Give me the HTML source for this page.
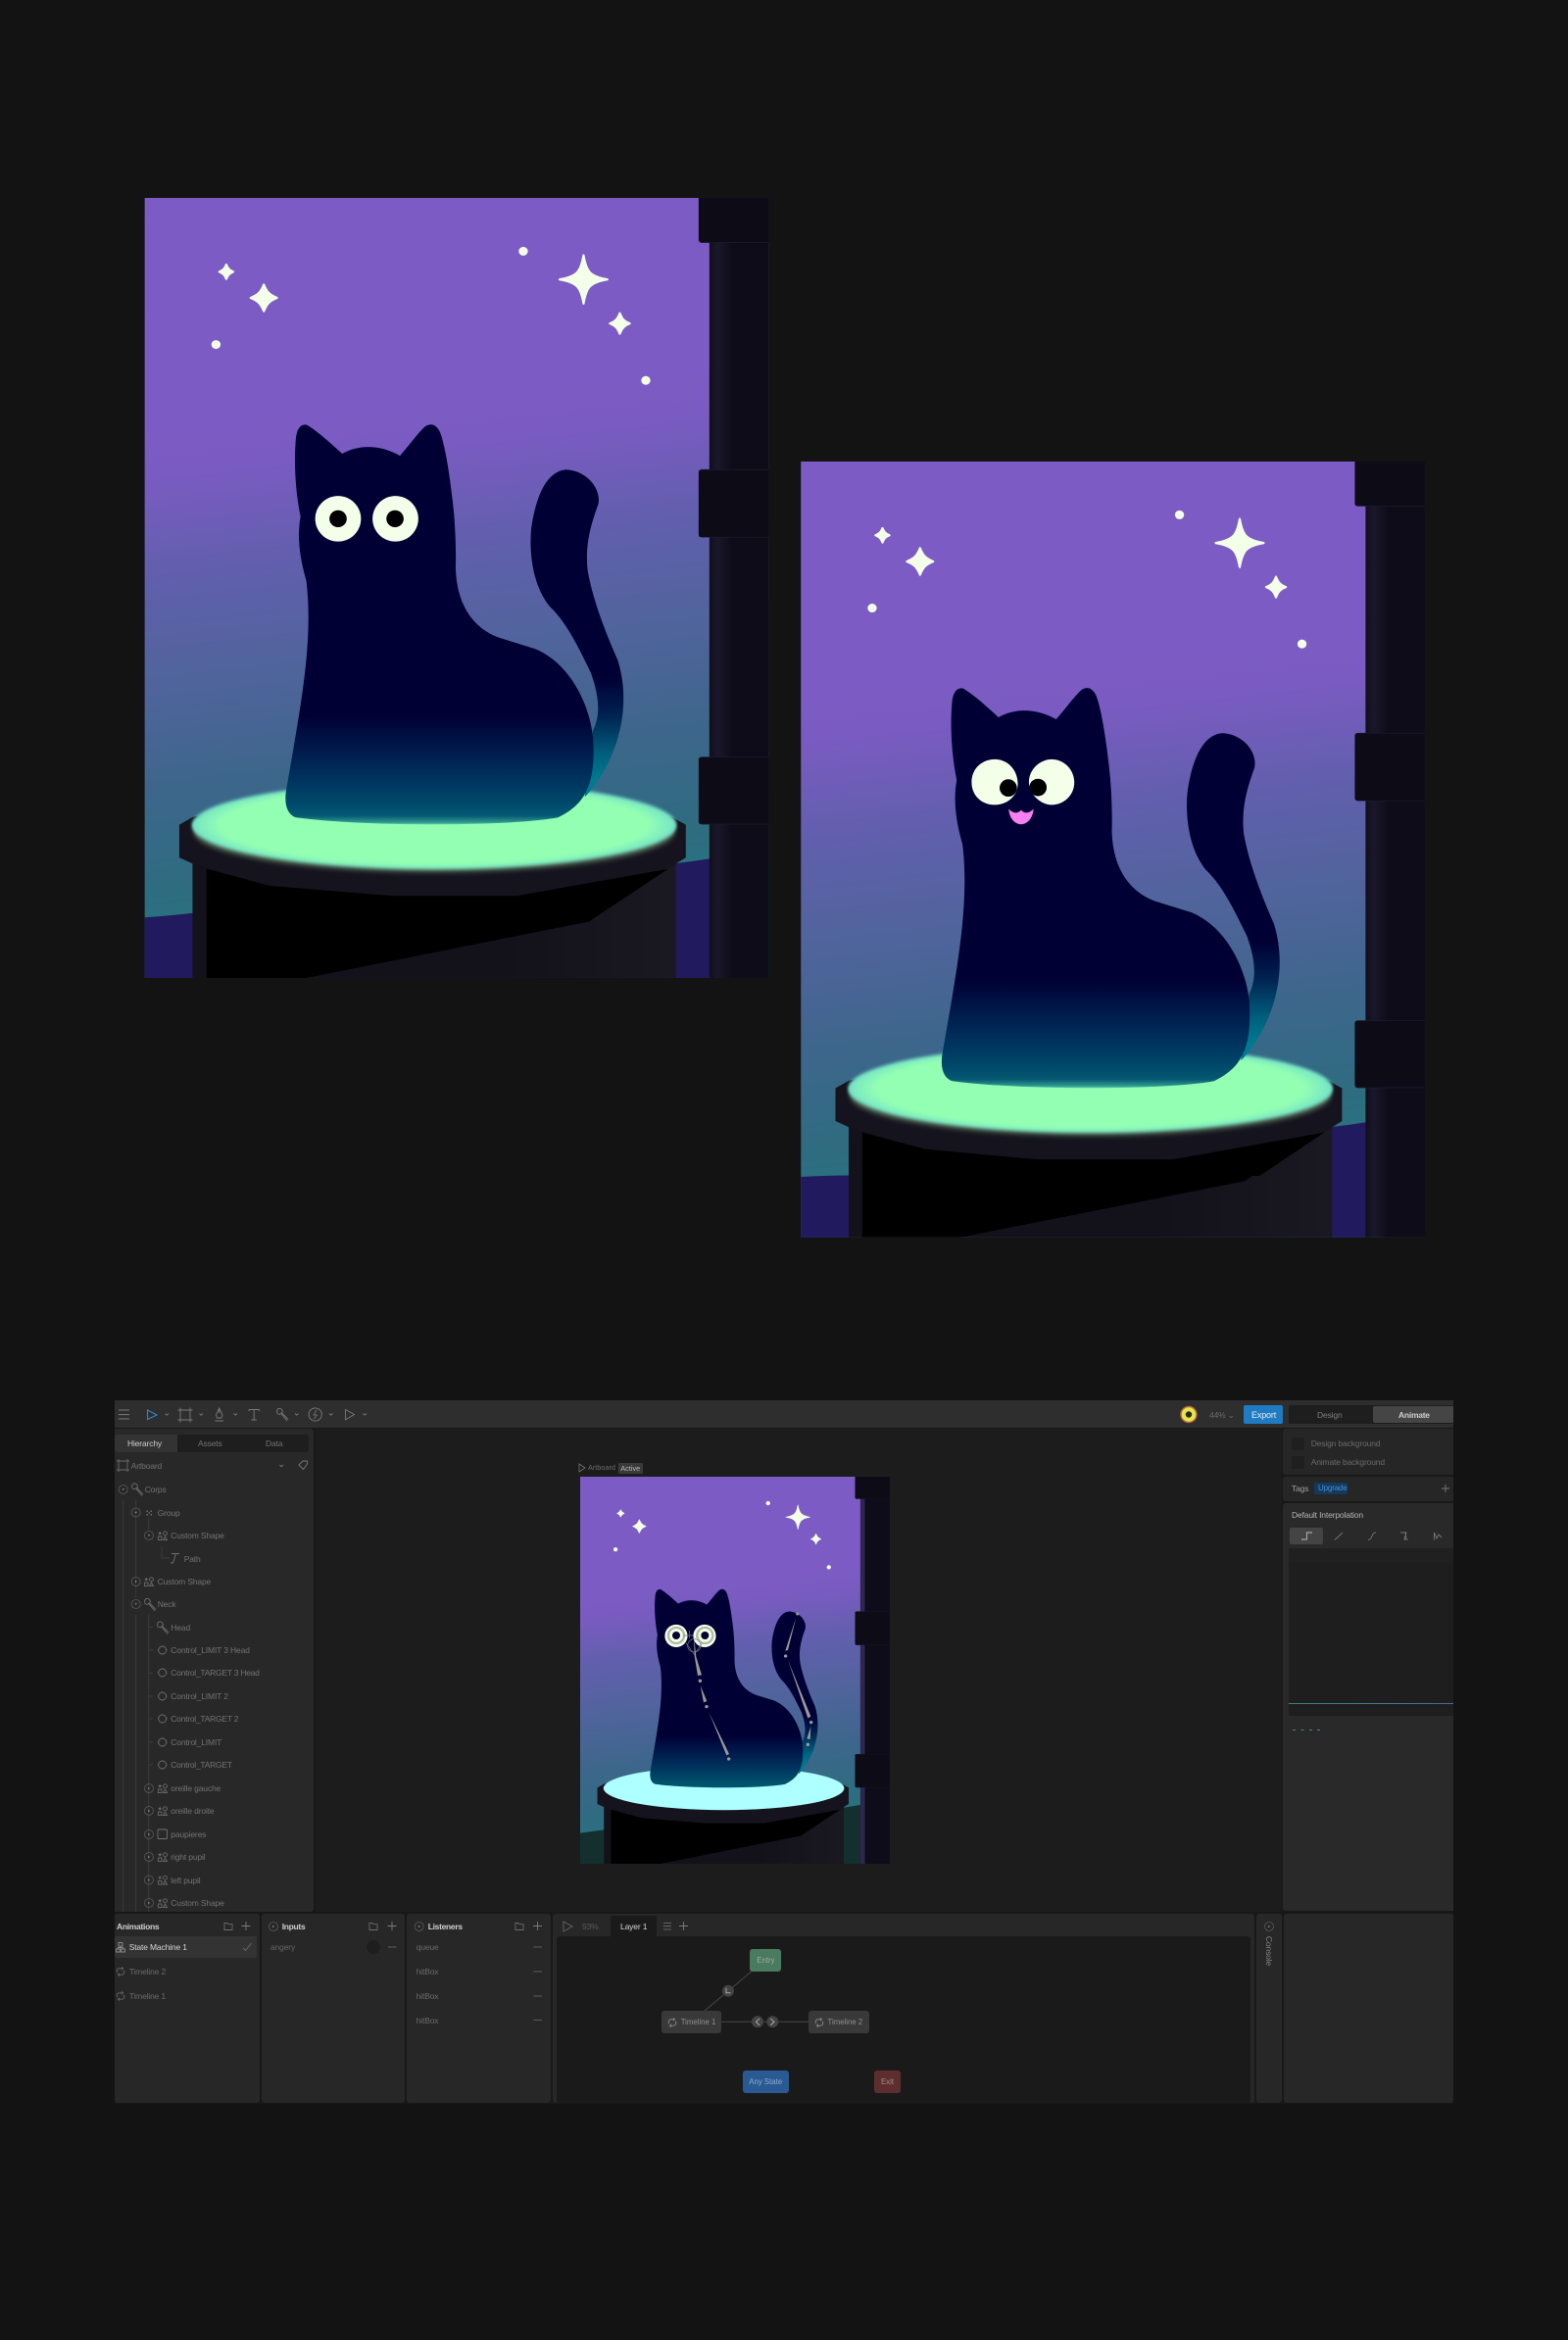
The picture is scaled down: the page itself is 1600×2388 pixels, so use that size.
<!DOCTYPE html>
<html><head><meta charset="utf-8"><title>Cat</title>
<style>
html,body{margin:0;padding:0;background:#131313}
body{position:relative;width:1600px;height:2388px;overflow:hidden;font-family:"Liberation Sans",sans-serif}
svg.a{position:absolute;display:block}
#ed{position:absolute;left:0;top:0;width:1600px;height:2388px;filter:blur(.3px)}
.p{position:absolute}
.t{position:absolute;white-space:nowrap;font-size:8.5px;line-height:10px;letter-spacing:-.15px;color:#727272}
.b{color:#cfcfcf}
.n{font-size:7.8px;letter-spacing:0}
</style></head><body>
<svg width="0" height="0" style="position:absolute"><defs>
<linearGradient id="sky" gradientUnits="userSpaceOnUse" x1="680" y1="420" x2="770" y2="1430">
<stop offset="0" stop-color="#7c5cc4"/><stop offset=".09" stop-color="#7a5bc1"/><stop offset=".28" stop-color="#615fad"/><stop offset=".48" stop-color="#50649c"/><stop offset=".68" stop-color="#3e668c"/><stop offset=".88" stop-color="#2e6c80"/><stop offset="1" stop-color="#277680"/></linearGradient>
<linearGradient id="cat" gradientUnits="userSpaceOnUse" x1="0" y1="1035" x2="0" y2="1248">
<stop offset="0" stop-color="#000034"/><stop offset=".3" stop-color="#001a4b"/><stop offset=".6" stop-color="#003560"/><stop offset=".82" stop-color="#004c6c"/><stop offset=".91" stop-color="#065a72"/><stop offset=".97" stop-color="#2f9a90"/><stop offset="1" stop-color="#84f2b8"/></linearGradient>
<linearGradient id="cat2" gradientUnits="userSpaceOnUse" x1="0" y1="1040" x2="0" y2="1247">
<stop offset="0" stop-color="#000034"/><stop offset=".3" stop-color="#00184a"/><stop offset=".62" stop-color="#00345e"/><stop offset="1" stop-color="#005a70"/></linearGradient>
<linearGradient id="tail" gradientUnits="userSpaceOnUse" x1="0" y1="960" x2="0" y2="1160">
<stop offset="0" stop-color="#000034"/><stop offset=".35" stop-color="#002050"/><stop offset=".75" stop-color="#00607e"/><stop offset="1" stop-color="#007a90"/></linearGradient>
<linearGradient id="pil" gradientUnits="userSpaceOnUse" x1="1387" y1="0" x2="1531" y2="0">
<stop offset="0" stop-color="#100e1b"/><stop offset=".14" stop-color="#1a172b"/><stop offset=".38" stop-color="#0e0c18"/><stop offset="1" stop-color="#0e0c18"/></linearGradient>
<linearGradient id="bas" gradientUnits="userSpaceOnUse" x1="900" y1="0" x2="1306" y2="0">
<stop offset="0" stop-color="#13121b"/><stop offset="1" stop-color="#1a1821"/></linearGradient>
<radialGradient id="gl"><stop offset="0" stop-color="#93ffb3"/><stop offset=".88" stop-color="#93ffb3"/><stop offset=".97" stop-color="#7debc0"/><stop offset="1" stop-color="#6fdcc8"/></radialGradient>
<filter id="bl" x="-10%" y="-30%" width="120%" height="160%"><feGaussianBlur stdDeviation="5"/></filter>
<filter id="bs" x="-5%" y="-15%" width="110%" height="130%"><feGaussianBlur stdDeviation="3"/></filter>
<clipPath id="c1"><rect x="18" y="23" width="1513" height="1522"/></clipPath>
<clipPath id="c2"><rect x="18" y="23" width="1513" height="1514"/></clipPath>
<path id="body" d="M385 490C388 472 398 463 412 466C440 480 470 502 497 522C540 503 590 505 637 526C660 505 680 482 698 469C712 461 727 465 735 482C750 515 762 590 768 640C772 680 773 715 772 745C775 830 830 870 885 883L965 903C1060 935 1105 1030 1106 1090C1110 1180 1075 1210 1020 1232C900 1250 550 1250 385 1232C360 1225 356 1200 362 1175C395 1020 428 890 410 770C392 720 388 680 396 645C382 590 380 530 385 490Z"/>
<path id="tl" d="M1105 1062C1122 1035 1122 1000 1100 950C1070 900 1040 850 1000 820C960 780 950 720 955 670C965 610 990 556 1040 553C1090 555 1125 590 1118 620C1100 660 1085 700 1092 750C1105 810 1140 880 1165 925C1190 990 1180 1060 1145 1120C1125 1155 1100 1180 1085 1192Z"/>
<path id="s1" vector-effect="non-scaling-stroke" d="M0-1C.12-.32 .26-.13 1 0C.26.13 .12.32 0 1C-.12.32-.26.13-1 0C-.26-.13-.12-.32 0-1Z"/>
<path id="s2" vector-effect="non-scaling-stroke" d="M0-1C.24-.42 .42-.24 1 0C.42.24 .24.42 0 1C-.24.42-.42.24-1 0C-.42-.24-.24-.42 0-1Z"/>
<g id="sky2" stroke-linejoin="round"><use href="#s1" transform="translate(1082 182) scale(58 47)"/><use href="#s2" transform="translate(307 218) scale(32 26)"/><use href="#s2" transform="translate(1170 268) scale(24 20)"/><use href="#s2" transform="translate(216 167) scale(17 14)"/><ellipse vector-effect="non-scaling-stroke" cx="936" cy="127" rx="8.5" ry="6.5"/><ellipse vector-effect="non-scaling-stroke" cx="191" cy="309" rx="8.5" ry="6.5"/><ellipse vector-effect="non-scaling-stroke" cx="1233" cy="379" rx="8.5" ry="6.5"/></g>
<path id="plat" d="M102 1246L135 1231 170 1225H1270L1298 1232 1330 1246V1310L1290 1330 920 1385H620L320 1365 134 1322 102 1310Z"/>
<g id="bands"><path d="M1361 23H1531V110H1367Q1361 110 1361 104Z"/><path d="M1367 553H1531V685H1367Q1361 685 1361 679V559Q1361 553 1367 553Z"/><path d="M1367 1114H1531V1245H1367Q1361 1245 1361 1239V1120Q1361 1114 1367 1114Z"/></g>
<g id="bandl" fill="none" stroke="#1e1b3a" stroke-width="1.2"><path d="M1367 110H1531M1367 553H1531M1367 685H1531M1367 1114H1531M1367 1245H1531"/></g>
<path id="bone" d="M3 1C1 3 1 6 4 7L7 5C8 3 6 0 3 1ZM6 6.5L12 13.5M6.5 5.5L13 12"/>
<g id="shp" fill="none" stroke="#6b6b6b" stroke-width=".9"><circle cx="7.5" cy="2.8" r="2"/><rect x=".4" y="6" width="3.6" height="3.6"/><path d="M5.5 9.6L7.5 6 9.5 9.6Z"/><path d="M2.2.5L2.8 2 4.2 2.2 3 3.2 3.4 4.6 2.2 3.8 1 4.6 1.4 3.2.2 2.2 1.6 2Z" fill="#6b6b6b" stroke="none"/></g>
<g id="tg" fill="none" stroke="#6b6b6b" stroke-width=".9"><circle cx="5" cy="5" r="4"/><path d="M5 .2V1.4M5 8.6V9.8M.2 5H1.4M8.6 5H9.8"/></g>
<g id="cd" fill="none" stroke="#5a5a5a" stroke-width=".8"><circle cx="5" cy="5" r="4.5"/><path d="M3.8 4.4L5 5.8 6.2 4.4Z" fill="#aaa" stroke="none"/></g>
<g id="cr" fill="none" stroke="#5a5a5a" stroke-width=".8"><circle cx="5" cy="5" r="4.5"/><path d="M4.4 3.8L5.8 5 4.4 6.2Z" fill="#aaa" stroke="none"/></g>
<g id="ch" fill="none" stroke="#777" stroke-width=".9"><path d="M.5.5L2.2 2.2 4 .5"/></g>
<g id="fo" fill="none" stroke="#6c6c6c" stroke-width=".9"><path d="M.5 1.5H3.5L4.5 2.7H8.5V8.5H.5Z"/></g>
<g id="pl" fill="none" stroke="#7c7c7c" stroke-width=".9"><path d="M4.5 0V9M0 4.5H9"/></g>
<g id="lp" fill="none" stroke="#666" stroke-width=".9"><path d="M1.8 6.2A3.4 3 0 0 1 3 1.8H7.5M6 .4L7.5 1.8 6 3.2M8.2 3.8A3.4 3 0 0 1 7 8.2H2.5M4 6.8L2.5 8.2 4 9.6"/></g>
<g id="lp2" fill="none" stroke="#8a8a8a" stroke-width=".9"><path d="M1.8 6.2A3.4 3 0 0 1 3 1.8H7.5M6 .4L7.5 1.8 6 3.2M8.2 3.8A3.4 3 0 0 1 7 8.2H2.5M4 6.8L2.5 8.2 4 9.6"/></g>
</defs></svg>

<!-- Card 1 -->
<svg class="a" style="left:140px;top:190px" width="660" height="820" viewBox="0 0 1568 1568" preserveAspectRatio="none">
<g clip-path="url(#c1)">
<rect x="18" y="23" width="1513" height="1522" fill="url(#sky)"/>
<path d="M18 1427Q80 1424 140 1418V1545H18ZM1300 1322Q1345 1318 1390 1312V1545H1300Z" fill="#211a5e"/>
<rect x="1387" y="23" width="144" height="1522" fill="url(#pil)"/>
<use href="#bands" fill="#0d0c16"/><use href="#bandl"/>
<use href="#sky2" fill="#f4ffe9" stroke="#f4ffe9" stroke-width="2.2"/>
<rect x="134" y="1300" width="1172" height="245" fill="url(#bas)"/>
<use href="#plat" fill="#15141e"/>
<path d="M168 1332L320 1365 620 1385H920L1288 1332 1095 1435 410 1545H168Z" fill="#000"/>
<ellipse cx="720" cy="1258" rx="584" ry="80" fill="#b6f5b4" opacity=".42" filter="url(#bl)"/>
<ellipse cx="720" cy="1247" rx="588" ry="86" fill="url(#gl)" filter="url(#bs)"/>
<use href="#tl" fill="url(#tail)"/><use href="#body" fill="url(#cat)"/>
<ellipse cx="487" cy="649" rx="55.5" ry="44.5" fill="#f4ffe9"/><ellipse cx="626" cy="649" rx="55.5" ry="44.5" fill="#f4ffe9"/>
<ellipse cx="487" cy="649" rx="21" ry="16.5" fill="#000"/><ellipse cx="625" cy="649" rx="21" ry="16.5" fill="#000"/>
</g></svg>

<!-- Card 2 -->
<svg class="a" style="left:810px;top:460px" width="660" height="820" viewBox="0 0 1568 1568" preserveAspectRatio="none">
<g transform="translate(-1 -2)"><g clip-path="url(#c2)">
<rect x="18" y="23" width="1513" height="1522" fill="url(#sky)"/>
<path d="M18 1419Q80 1416 140 1416V1545H18ZM1300 1322Q1345 1318 1390 1312V1545H1300Z" fill="#211a5e"/>
<rect x="1387" y="23" width="144" height="1522" fill="url(#pil)"/>
<use href="#bands" fill="#0d0c16"/><use href="#bandl"/>
<use href="#sky2" fill="#f4ffe9" stroke="#f4ffe9" stroke-width="2.2"/>
<rect x="134" y="1300" width="1172" height="245" fill="url(#bas)"/>
<use href="#plat" fill="#15141e"/>
<path d="M167 1332L320 1365 590 1385H920L1288 1332 1130 1417H1112L1095 1427 405 1537H167Z" fill="#000"/>
<ellipse cx="720" cy="1258" rx="584" ry="80" fill="#b6f5b4" opacity=".42" filter="url(#bl)"/>
<ellipse cx="720" cy="1247" rx="588" ry="86" fill="url(#gl)" filter="url(#bs)"/>
<use href="#tl" fill="url(#tail)"/><use href="#body" fill="url(#cat)"/>
<path d="M432 649C432 620 460 604 488 604C520 604 544 625 544 652C544 675 520 693 488 693C458 693 432 676 432 649ZM571 649C571 622 600 604 626 604C656 604 681 624 681 649C681 674 656 693 626 693C600 693 571 672 571 649Z" fill="#f4ffe9"/>
<ellipse cx="521" cy="660" rx="21" ry="17" fill="#000"/><ellipse cx="593" cy="659" rx="21" ry="17" fill="#000"/>
<path d="M522 701C530 708 542 712 552 703C562 712 574 708 582 701C581 720 566 731 552 731C538 731 523 720 522 701Z" fill="#f77ff0"/>
</g></g></svg>

<div id="ed">
<!-- editor frame -->
<div class="p" style="left:117px;top:1429px;width:1366px;height:718px;background:#181818"></div>
<div class="p" style="left:117px;top:1429px;width:1366px;height:28px;background:#2e2e2e"></div>
<div class="p" style="left:117px;top:1458px;width:203px;height:493px;background:#282828;border-radius:0 3px 3px 0"></div>
<div class="p" style="left:322px;top:1458px;width:986px;height:493px;background:#1c1c1c"></div>
<div class="p" style="left:1309px;top:1458px;width:174px;height:47px;background:#262626;border-radius:3px 0 0 3px"></div>
<div class="p" style="left:1309px;top:1507px;width:174px;height:25px;background:#262626;border-radius:3px 0 0 3px"></div>
<div class="p" style="left:1309px;top:1534px;width:174px;height:416px;background:#292929;border-radius:3px 0 0 3px"></div>
<div class="p" style="left:117px;top:1953px;width:148px;height:193px;background:#272727;border-radius:3px"></div>
<div class="p" style="left:267px;top:1953px;width:146px;height:193px;background:#272727;border-radius:3px"></div>
<div class="p" style="left:415px;top:1953px;width:147px;height:193px;background:#272727;border-radius:3px"></div>
<div class="p" style="left:564px;top:1953px;width:716px;height:193px;background:#272727;border-radius:3px"></div>
<div class="p" style="left:568px;top:1976px;width:708px;height:170px;background:#1a1a1a;border-radius:3px 3px 0 0"></div>
<div class="p" style="left:1282px;top:1953px;width:26px;height:193px;background:#272727;border-radius:3px"></div>
<div class="p" style="left:1310px;top:1953px;width:173px;height:193px;background:#272727;border-radius:3px"></div>

<!-- left tabs -->
<div class="p" style="left:117px;top:1464px;width:198px;height:18px;background:#1e1e1e;border-radius:3px"></div>
<div class="p" style="left:117px;top:1464px;width:64px;height:18px;background:#333;border-radius:3px 0 0 3px"></div>
<div class="t b" style="left:130px;top:1468px">Hierarchy</div>
<div class="t" style="left:202px;top:1468px">Assets</div>
<div class="t" style="left:271px;top:1468px">Data</div>

<!-- right panel backgrounds -->
<div class="p" style="left:1318px;top:1467px;width:13px;height:13px;background:#1f1f1f;border-radius:1px"></div>
<div class="p" style="left:1318px;top:1486px;width:13px;height:13px;background:#1f1f1f;border-radius:1px"></div>
<div class="p" style="left:1316px;top:1559px;width:34px;height:17px;background:#444;border-radius:2px"></div>
<div class="p" style="left:1315px;top:1580px;width:168px;height:171px;background:#1e1e1e;border-radius:2px 0 0 2px"></div>
<div class="p" style="left:1315px;top:1580px;width:168px;height:15px;background:#202020"></div>
<div class="p" style="left:1315px;top:1738px;width:168px;height:1px;background:linear-gradient(90deg,#3c8070,#44789a 60%,#3f6a96)"></div>
<div class="p" style="left:1319px;top:1765px;width:28px;height:1px;background:repeating-linear-gradient(90deg,#4c7f92 0 3px,transparent 3px 8.4px)"></div>

<!-- tree + toolbar icons -->
<svg class="a" style="left:0;top:0" width="1600" height="2388" viewBox="0 0 1600 2388">
<g stroke="#3c3c3c" stroke-width=".9" fill="none">
<path d="M125.7 1530V1951M138.7 1530V1630M138.7 1648V1951" stroke="#3a3a3a"/>
<path d="M151.7 1549V1561M151.7 1647V1951M165 1578V1590H173M152 1660.5H156M152 1684H156M152 1707.5H156M152 1731H156M152 1754H156M152 1777.5H156M152 1801H156"/>
</g>
<!-- toolbar -->
<path d="M121 1439H132M121 1443.6H132M121 1448H132" stroke="#7a7a7a" stroke-width="1"/>
<path d="M150.5 1439L160 1444 150.5 1448.5V1444.5Z" fill="none" stroke="#2f86cf" stroke-width="1.1"/>
<path d="M184 1439H194V1449H184ZM184 1436.5V1451.5M194 1436.5V1451.5M181.5 1439H196.5M181.5 1449H196.5" fill="none" stroke="#7a7a7a" stroke-width=".9"/>
<path d="M223.7 1437L227 1444 226 1447H221.5L220.5 1444ZM223.7 1437V1442M219.5 1450H228" fill="none" stroke="#7a7a7a" stroke-width=".9"/>
<path d="M254 1438.5H264.5M259.2 1438.5V1449M256.5 1449H262M254 1438.5V1440M264.5 1438.5V1440" fill="none" stroke="#7a7a7a" stroke-width=".9"/>
<use href="#bone" x="281" y="1436.5" fill="none" stroke="#7a7a7a" stroke-width=".9"/>
<circle cx="321.7" cy="1443.5" r="6.6" fill="none" stroke="#7a7a7a" stroke-width=".9"/><path d="M323 1439L320 1444H323.4L320.4 1448" fill="none" stroke="#7a7a7a" stroke-width=".8"/>
<path d="M352.5 1438.5L361.5 1443.5 352.5 1449Z" fill="none" stroke="#7a7a7a" stroke-width=".9"/>
<use href="#ch" x="168" y="1442"/><use href="#ch" x="203" y="1442"/><use href="#ch" x="238" y="1442"/><use href="#ch" x="300.5" y="1442"/><use href="#ch" x="335.5" y="1442"/><use href="#ch" x="370" y="1442"/>
<circle cx="1213" cy="1443.5" r="8.7" fill="#b86a3a"/><circle cx="1213" cy="1443.5" r="7.3" fill="#e6e54c"/><circle cx="1213" cy="1443.5" r="3.2" fill="#2a2a1a"/>
<!-- artboard row -->
<path d="M121 1491H130V1500H121ZM121 1489V1502M130 1489V1502M119 1491H132M119 1500H132" fill="none" stroke="#6b6b6b" stroke-width=".9"/>
<use href="#ch" x="285" y="1494.5"/>
<path d="M305 1495L309 1491H313.5V1494L309.5 1499.5Z" fill="none" stroke="#777" stroke-width=".9"/>
<!-- disclosure -->
<use href="#cd" x="120.7" y="1515"/><use href="#cd" x="133.7" y="1538.5"/><use href="#cd" x="147" y="1562"/><use href="#cr" x="133.7" y="1609"/><use href="#cd" x="133.7" y="1632"/>
<use href="#cr" x="147" y="1820"/><use href="#cr" x="147" y="1843"/><use href="#cr" x="147" y="1867"/><use href="#cr" x="147" y="1890"/><use href="#cr" x="147" y="1913.5"/><use href="#cr" x="147" y="1937"/>
<!-- node icons -->
<g fill="none" stroke="#6f6f6f" stroke-width=".9"><use href="#bone" x="133" y="1513"/><use href="#bone" x="146" y="1630.5"/><use href="#bone" x="159" y="1654"/></g>
<path d="M149.5 1541.5h1.5v1.5h-1.5zM153.5 1541.5h1.5v1.5h-1.5zM149.5 1545h1.5v1.5h-1.5zM153.5 1545h1.5v1.5h-1.5zM151.5 1543.3h1.5v1.5h-1.5z" fill="#6b6b6b"/>
<use href="#shp" x="161" y="1562"/><use href="#shp" x="147" y="1609"/>
<path d="M174 1595H176.5L179.5 1585.5H183M179.5 1585.5L176.5 1595M175 1585.5H179.5" fill="none" stroke="#6f6f6f" stroke-width=".9"/>
<use href="#tg" x="160.7" y="1679"/><use href="#tg" x="160.7" y="1702"/><use href="#tg" x="160.7" y="1726"/><use href="#tg" x="160.7" y="1749"/><use href="#tg" x="160.7" y="1773"/><use href="#tg" x="160.7" y="1796"/>
<use href="#shp" x="161" y="1820"/><use href="#shp" x="161" y="1843"/><rect x="161" y="1867" width="9.5" height="9.5" rx="1" fill="none" stroke="#6f6f6f" stroke-width=".9"/><use href="#shp" x="161" y="1890"/><use href="#shp" x="161" y="1913.5"/><use href="#shp" x="161" y="1937"/>
<!-- bottom icons -->
<use href="#fo" x="228.5" y="1961"/><use href="#pl" x="246.5" y="1961"/><use href="#fo" x="376.5" y="1961"/><use href="#pl" x="395.5" y="1961"/><use href="#fo" x="525.5" y="1961"/><use href="#pl" x="544" y="1961"/>
<use href="#cr" x="274" y="1961"/><use href="#cr" x="422.7" y="1961"/>
<use href="#lp" x="118" y="2007"/><use href="#lp" x="118" y="2032"/>
<circle cx="381" cy="1987" r="7" fill="#1e1e1e"/>
<path d="M396 1987H404.5M544.5 1987H553M544.5 2012H553M544.5 2037H553M544.5 2061.5H553" stroke="#5c5c5c" stroke-width="1"/>
<!-- state machine -->
<path d="M575 1961V1971L584 1966Z" fill="none" stroke="#666" stroke-width=".9"/>
<path d="M677 1962.5H685M677 1965.7H685M677 1969H685" stroke="#777" stroke-width=".8"/>
<use href="#pl" x="693" y="1961"/>
<path d="M767 2011.7L719 2052M736 2063.3H825" stroke="#474747" stroke-width="1"/>
<circle cx="743" cy="2031.7" r="6" fill="#434343"/><path d="M741 2028.8V2033.8H745.5" fill="none" stroke="#aaa" stroke-width="1"/>
<circle cx="773" cy="2063.3" r="6" fill="#434343"/><path d="M775 2060L771.4 2063.3 775 2066.7" fill="none" stroke="#aaa" stroke-width="1"/>
<circle cx="788.3" cy="2063.3" r="6" fill="#434343"/><path d="M786.3 2060L790 2063.3 786.3 2066.7" fill="none" stroke="#aaa" stroke-width="1"/>
<!-- interpolation icons -->
<path d="M1328 1571H1333.5V1564H1339" fill="none" stroke="#bbb" stroke-width=".9"/>
<path d="M1362 1571.5L1370 1564" stroke="#777" stroke-width=".9"/>
<path d="M1396 1571.5C1401 1571 1399 1564 1404 1564" fill="none" stroke="#777" stroke-width=".9"/>
<path d="M1429 1564H1435L1433 1571H1436.5M1434 1564L1435 1571" fill="none" stroke="#777" stroke-width=".9"/>
<path d="M1463.5 1571.5V1564L1466 1570 1468 1566 1471 1569" fill="none" stroke="#777" stroke-width=".9"/>
<path d="M1475 1515V1523M1471 1519H1479" stroke="#777" stroke-width=".9"/>
<path d="M591 1494V1502L597 1498Z" fill="none" stroke="#777" stroke-width=".8"/>
</svg>

<!-- tree text -->
<div class="t" style="left:133.7px;top:1491px">Artboard</div>
<div class="t" style="left:147.7px;top:1515px">Corps</div>
<div class="t" style="left:160.7px;top:1538.5px">Group</div>
<div class="t" style="left:174.3px;top:1562px">Custom Shape</div>
<div class="t" style="left:187.7px;top:1585.5px">Path</div>
<div class="t" style="left:160.7px;top:1609px">Custom Shape</div>
<div class="t" style="left:160.7px;top:1632px">Neck</div>
<div class="t" style="left:174.3px;top:1656px">Head</div>
<div class="t" style="left:174.3px;top:1679px">Control_LIMIT 3 Head</div>
<div class="t" style="left:174.3px;top:1702px;letter-spacing:-.25px">Control_TARGET 3 Head</div>
<div class="t" style="left:174.3px;top:1726px">Control_LIMIT 2</div>
<div class="t" style="left:174.3px;top:1749px;letter-spacing:-.25px">Control_TARGET 2</div>
<div class="t" style="left:174.3px;top:1773px">Control_LIMIT</div>
<div class="t" style="left:174.3px;top:1796px;letter-spacing:-.25px">Control_TARGET</div>
<div class="t" style="left:174.3px;top:1820px">oreille gauche</div>
<div class="t" style="left:174.3px;top:1843px">oreille droite</div>
<div class="t" style="left:174.3px;top:1867px">paupieres</div>
<div class="t" style="left:174.3px;top:1890px">right pupil</div>
<div class="t" style="left:174.3px;top:1913.5px">left pupil</div>
<div class="t" style="left:174.3px;top:1937px">Custom Shape</div>

<!-- toolbar right -->
<div class="t" style="left:1234px;top:1438.5px;color:#6c6c6c">44% ⌄</div>
<div class="p" style="left:1269px;top:1434px;width:40px;height:19px;background:#1f7bc2;border-radius:2px"></div>
<div class="t" style="left:1277px;top:1439px;color:#e6eef5;font-size:9px">Export</div>
<div class="p" style="left:1315px;top:1434px;width:168px;height:19px;background:#1e1e1e;border-radius:2px 0 0 2px"></div>
<div class="p" style="left:1401px;top:1435px;width:82px;height:17px;background:#454545;border-radius:2px 0 0 2px"></div>
<div class="t" style="left:1344px;top:1438.5px;color:#7e7e7e">Design</div>
<div class="t b" style="left:1427px;top:1438.5px;font-weight:bold;letter-spacing:-.25px">Animate</div>

<!-- right panel text -->
<div class="t" style="left:1337.7px;top:1468px;color:#6a6a6a">Design background</div>
<div class="t" style="left:1337.7px;top:1487px;color:#6a6a6a">Animate background</div>
<div class="t" style="left:1318px;top:1514px;color:#a0a0a0">Tags</div>
<div class="p" style="left:1341px;top:1513px;width:34px;height:12px;background:#15395b;border-radius:2px"></div>
<div class="t" style="left:1345px;top:1514px;color:#3f90d8;font-size:8px">Upgrade</div>
<div class="t" style="left:1318px;top:1541px;color:#b4b4b4">Default Interpolation</div>

<!-- bottom panels -->
<div class="t b" style="left:119px;top:1961px;font-weight:bold;letter-spacing:-.3px">Animations</div>
<div class="p" style="left:117px;top:1976px;width:145px;height:22px;background:#333;border-radius:2px"></div>
<div class="t" style="left:131.7px;top:1982px;color:#d6d6d6">State Machine 1</div>
<svg class="a" style="left:117px;top:1976px" width="15" height="22"><path d="M4 6.5h4v3.5h-4zM1.5 13h4v3h-4zM6.5 13h4v3h-4zM6 10v1.5M3.5 13v-1.5h5v1.5" fill="none" stroke="#8a8a8a" stroke-width=".9"/></svg>
<svg class="a" style="left:247px;top:1981px" width="12" height="12"><path d="M1 7L3.5 9.5 9.5 2" fill="none" stroke="#6a6a6a" stroke-width=".9"/></svg>
<div class="t" style="left:131.7px;top:2007px;color:#6a6a6a">Timeline 2</div>
<div class="t" style="left:131.7px;top:2032px;color:#6a6a6a">Timeline 1</div>
<div class="t b" style="left:287.7px;top:1961px;font-weight:bold;letter-spacing:-.3px">Inputs</div>
<div class="t" style="left:276px;top:1982px;color:#666">angery</div>
<div class="t b" style="left:436.7px;top:1961px;font-weight:bold;letter-spacing:-.3px">Listeners</div>
<div class="t" style="left:424.7px;top:1982px;color:#6a6a6a">queue</div>
<div class="t" style="left:424.7px;top:2007px;color:#6a6a6a">hitBox</div>
<div class="t" style="left:424.7px;top:2032px;color:#6a6a6a">hitBox</div>
<div class="t" style="left:424.7px;top:2056.5px;color:#6a6a6a">hitBox</div>

<!-- state machine text -->
<div class="t" style="left:594px;top:1961px;color:#5a5a5a">93%</div>
<div class="p" style="left:622.7px;top:1955px;width:47.3px;height:21px;background:#1a1a1a;border-radius:2px 2px 0 0"></div>
<div class="t" style="left:633px;top:1961px;color:#d8d8d8">Layer 1</div>
<div class="p" style="left:765px;top:1989px;width:32px;height:23px;background:#4a7a60;border-radius:3px"></div>
<div class="t n" style="left:772.3px;top:1995.7px;color:#99b0a0">Entry</div>
<div class="p" style="left:675px;top:2052px;width:61px;height:23px;background:#393939;border-radius:3px"></div>
<div class="t n" style="left:694.7px;top:2058.7px;color:#8f8f8f">Timeline 1</div>
<div class="p" style="left:825px;top:2052px;width:62px;height:23px;background:#393939;border-radius:3px"></div>
<div class="t n" style="left:844.5px;top:2058.7px;color:#8f8f8f">Timeline 2</div>
<svg class="a" style="left:680px;top:2058px" width="12" height="12"><use href="#lp2" x="1" y="1"/></svg>
<svg class="a" style="left:830px;top:2058px" width="12" height="12"><use href="#lp2" x="1" y="1"/></svg>
<div class="p" style="left:757.7px;top:2113px;width:47.3px;height:23px;background:#2a5a94;border-radius:3px"></div>
<div class="t n" style="left:764.3px;top:2119.7px;color:#8faacb">Any State</div>
<div class="p" style="left:892px;top:2113px;width:27px;height:23px;background:#5e2e2e;border-radius:3px"></div>
<div class="t n" style="left:899px;top:2119.7px;color:#a58a8a">Exit</div>
<svg class="a" style="left:1289.7px;top:1960.7px" width="10" height="10"><use href="#cr"/></svg>
<div class="t" style="left:1275px;top:1986px;width:40px;text-align:center;color:#858585;transform:rotate(90deg)">Console</div>

<!-- mini artboard -->
<div class="t" style="left:600px;top:1493px;color:#6a6a6a;font-size:7.3px;letter-spacing:0">Artboard</div>
<div class="p" style="left:631px;top:1493px;width:25px;height:10.5px;background:#3a3a3a;border-radius:1px"></div>
<div class="t" style="left:633.3px;top:1493.5px;color:#bbb;font-size:7.3px;letter-spacing:0">Active</div>
<svg class="a" style="left:592px;top:1507px" width="316" height="395" viewBox="18 23 1513 1522" preserveAspectRatio="none">
<rect x="18" y="23" width="1513" height="1522" fill="url(#sky)"/>
<path d="M18 1424Q70 1418 140 1411V1545H18ZM1300 1325Q1345 1320 1390 1313V1545H1300Z" fill="#13302e"/>
<rect x="1387" y="23" width="144" height="1522" fill="#0e0c18"/>
<rect x="1387" y="23" width="22" height="1522" fill="#31244e"/>
<use href="#bands" fill="#0d0c16"/><use href="#bandl"/>
<use href="#sky2" fill="#f4ffe9" stroke="#f4ffe9" stroke-width=".8"/>
<rect x="134" y="1300" width="1172" height="245" fill="url(#bas)"/>
<use href="#plat" fill="#15141e"/>
<path d="M168 1332L320 1365 620 1385H920L1288 1332 1095 1435 410 1545H168Z" fill="#000"/>
<ellipse cx="720" cy="1248" rx="588" ry="86" fill="#aeffff"/>
<use href="#tl" fill="url(#tail)"/><use href="#body" fill="url(#cat2)"/>
<ellipse cx="487" cy="649" rx="55.5" ry="44.5" fill="#f4ffe9"/><ellipse cx="626" cy="649" rx="55.5" ry="44.5" fill="#f4ffe9"/>
</svg>
<svg class="a" style="left:580px;top:1480px" width="340" height="440" viewBox="0 0 1020 1320">
<g fill="none" stroke="#b4b8a9" stroke-width="7"><circle cx="330" cy="567" r="24"/><circle cx="418" cy="567" r="24"/></g>
<circle cx="330" cy="567" r="12" fill="#05052e"/><circle cx="418" cy="567" r="12" fill="#05052e"/>
<g fill="none" stroke="#7a7a7a" stroke-width="2"><circle cx="385" cy="598" r="20"/><path d="M360 590L385 625 410 590M370 552V575M352 567H382"/></g>
<g fill="#9a9a9a">
<path d="M384 565L391 632 408 688 396 690 386 630Z"/>
<path d="M404 720L424 768 414 772Z"/><path d="M430 802L492 930 484 934Z"/>
<path d="M697 512L672 612 664 614Z"/><path d="M672 642L742 815 733 820Z"/><path d="M742 846L740 885 730 883Z"/>
<circle cx="403" cy="706" r="5"/><circle cx="423" cy="785" r="5"/><circle cx="491" cy="945" r="5"/><circle cx="701" cy="501" r="4.5"/><circle cx="665" cy="630" r="5"/><circle cx="743" cy="833" r="5"/><circle cx="733" cy="901" r="5"/>
</g></svg>
</div>
</body></html>
